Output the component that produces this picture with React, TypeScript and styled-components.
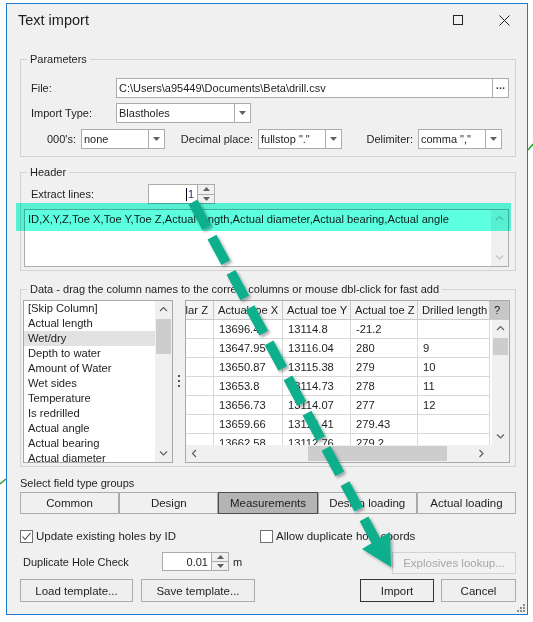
import * as React from 'react';
import styled, {createGlobalStyle} from 'styled-components';

const GlobalStyle = createGlobalStyle`
  html, body {
    margin: 0;
    padding: 0;
    background: #fff;
  }
  body {
    font-family: "Liberation Sans", Arial, sans-serif;
    font-size: 11px;
    color: #1e1e1e;
  }
  *, *::before, *::after {
    box-sizing: border-box;
  }
`;

type Dir = 'up' | 'down' | 'left' | 'right';

const COLUMNS = [
  {title: 'Collar Z', width: 28},
  {title: 'Actual toe X', width: 69},
  {title: 'Actual toe Y', width: 68},
  {title: 'Actual toe Z', width: 67},
  {title: 'Drilled length', width: 72},
];

const ROWS = [
  ['', '13696.4', '13114.8', '-21.2', ''],
  ['', '13647.95', '13116.04', '280', '9'],
  ['', '13650.87', '13115.38', '279', '10'],
  ['', '13653.8', '13114.73', '278', '11'],
  ['', '13656.73', '13114.07', '277', '12'],
  ['', '13659.66', '13113.41', '279.43', ''],
  ['', '13662.58', '13112.76', '279.2', ''],
];

const FIELDS = [
  '[Skip Column]', 'Actual length', 'Wet/dry', 'Depth to water', 'Amount of Water', 'Wet sides',
  'Temperature', 'Is redrilled', 'Actual angle', 'Actual bearing', 'Actual diameter',
];

const GROUPS = ['Common', 'Design', 'Measurements', 'Design loading', 'Actual loading'];

const Page = styled.div`
  position: relative;
  width: 533px;
  height: 622px;
  padding: 3px 5px 7px 6px;
  overflow: hidden;
`;

const Window = styled.div`
  position: relative;
  height: 100%;
  border: 1px solid #1c7bd0;
  background: #f0f0f0;
  display: flex;
  flex-direction: column;
`;

const TitleBar = styled.div`
  height: 32px;
  flex-shrink: 0;
  display: flex;
  align-items: center;
  padding-left: 11px;
`;

const Title = styled.div`
  flex: 1;
  font-size: 14.5px;
  color: #1b1b1b;
`;

const CaptionButton = styled.div<{$w: number}>`
  width: ${p => p.$w}px;
  height: 100%;
  display: flex;
  align-items: center;
  justify-content: center;
`;

const Body = styled.div`
  flex: 1;
  display: flex;
  flex-direction: column;
  padding: 15px 11px 0 13px;
`;

const Group = styled.fieldset<{$mt?: number}>`
  margin: ${p => p.$mt || 0}px 0 0;
  padding: 0;
  min-width: 0;
  border: 1px solid #d3d3d3;
  legend {
    margin-left: 6px;
    padding: 0 3px;
    line-height: 16px;
    white-space: nowrap;
  }
`;

const GroupContent = styled.div<{$pad: string}>`
  padding: ${p => p.$pad};
  display: flex;
  flex-direction: column;
`;

const Row = styled.div<{$mt?: number; $gap?: number}>`
  display: flex;
  align-items: center;
  height: 20px;
  margin-top: ${p => p.$mt || 0}px;
  gap: ${p => p.$gap || 0}px;
`;

const Label = styled.div<{$w: number; $right?: boolean; $ml?: number}>`
  width: ${p => p.$w}px;
  flex-shrink: 0;
  margin-left: ${p => p.$ml || 0}px;
  text-align: ${p => (p.$right ? 'right' : 'left')};
  white-space: nowrap;
`;

const Box = styled.div<{$w?: number; $h?: number}>`
  width: ${p => (p.$w ? `${p.$w}px` : 'auto')};
  flex: ${p => (p.$w ? '0 0 auto' : '1')};
  height: ${p => p.$h || 20}px;
  display: flex;
  border: 1px solid #acacac;
  background: #fff;
`;

const BoxText = styled.div<{$right?: boolean}>`
  flex: 1;
  display: flex;
  align-items: center;
  justify-content: ${p => (p.$right ? 'flex-end' : 'flex-start')};
  padding: 0 3px 0 2px;
  white-space: nowrap;
  overflow: hidden;
`;

const BoxButton = styled.div`
  width: 16px;
  flex-shrink: 0;
  border-left: 1px solid #acacac;
  display: flex;
  align-items: center;
  justify-content: center;
  color: #444;
  font-weight: bold;
  letter-spacing: -0.5px;
`;

const SpinButtons = styled.div`
  width: 17px;
  flex-shrink: 0;
  display: flex;
  flex-direction: column;
  border-left: 1px solid #acacac;
  background: #f0f0f0;
  > div {
    flex: 1;
    display: flex;
    align-items: center;
    justify-content: center;
  }
  > div + div {
    border-top: 1px solid #acacac;
  }
`;

const Caret = styled.span`
  border-left: 1px solid #000;
  padding-left: 1px;
  line-height: 13px;
  color: #2a2a7a;
`;

const TextArea = styled.div`
  margin-top: 5px;
  height: 58px;
  display: flex;
  border: 1px solid #acacac;
  background: #fff;
`;

const TextLines = styled.div`
  flex: 1;
  padding: 2px 3px;
  line-height: 15px;
  font-size: 11.2px;
  white-space: nowrap;
  overflow: hidden;
`;

const ScrollV = styled.div<{$w?: number}>`
  width: ${p => p.$w || 17}px;
  flex-shrink: 0;
  display: flex;
  flex-direction: column;
  background: #f0f0f0;
`;

const ScrollH = styled.div`
  display: flex;
  background: #f0f0f0;
  height: 17px;
`;

const ArrowCell = styled.div`
  width: 17px;
  height: 17px;
  flex-shrink: 0;
  display: flex;
  align-items: center;
  justify-content: center;
`;

const Track = styled.div<{$horizontal?: boolean}>`
  flex: 1;
  display: flex;
  flex-direction: ${p => (p.$horizontal ? 'row' : 'column')};
  padding: 1px;
`;

const Thumb = styled.div<{$offset: number; $size: number; $horizontal?: boolean}>`
  background: #cdcdcd;
  flex-shrink: 0;
  ${p => (p.$horizontal
    ? `margin-left: ${p.$offset}px; width: ${p.$size}px;`
    : `margin-top: ${p.$offset}px; height: ${p.$size}px;`)}
`;

const DataArea = styled.div`
  display: flex;
  height: 163px;
`;

const ListBox = styled.div`
  width: 150px;
  flex-shrink: 0;
  display: flex;
  border: 1px solid #a8a8a8;
  background: #fff;
`;

const ListItems = styled.div`
  flex: 1;
  overflow: hidden;
`;

const ListItem = styled.div<{$selected?: boolean}>`
  height: 15px;
  line-height: 15px;
  padding-left: 4px;
  font-size: 11.2px;
  white-space: nowrap;
  background: ${p => (p.$selected ? '#e2e2e2' : 'transparent')};
`;

const Splitter = styled.div`
  width: 12px;
  flex-shrink: 0;
  display: flex;
  align-items: center;
  justify-content: center;
`;

const GridView = styled.div`
  flex: 1;
  display: grid;
  grid-template-columns: 1fr 19px;
  grid-template-rows: 19px 1fr 17px;
  border: 1px solid #a8a8a8;
  background: #fff;
  overflow: hidden;
`;

const HeaderRow = styled.div`
  grid-column: 1 / -1;
  display: flex;
`;

const HeaderCell = styled.div<{$w?: number; $dark?: boolean; $clip?: boolean}>`
  width: ${p => (p.$w ? `${p.$w}px` : 'auto')};
  flex: ${p => (p.$w ? '0 0 auto' : '1')};
  display: flex;
  align-items: center;
  justify-content: ${p => (p.$clip ? 'flex-end' : 'flex-start')};
  padding: ${p => (p.$clip ? '0 5px 0 0' : '0 0 0 4px')};
  overflow: hidden;
  white-space: nowrap;
  font-size: 11.2px;
  background: ${p => (p.$dark ? '#c6c6c6' : '#f4f4f4')};
  border-right: 1px solid #c9c9c9;
  border-bottom: 1px solid #c9c9c9;
`;

const GridBody = styled.div`
  overflow: hidden;
`;

const GridRow = styled.div`
  display: flex;
  height: 19px;
  border-bottom: 1px solid #d8d8d8;
`;

const GridCell = styled.div<{$w?: number}>`
  width: ${p => (p.$w ? `${p.$w}px` : 'auto')};
  flex: ${p => (p.$w ? '0 0 auto' : '1')};
  padding-left: 5px;
  line-height: 18px;
  font-size: 11.2px;
  white-space: nowrap;
  overflow: hidden;
  border-right: 1px solid #d8d8d8;
`;

const GridCorner = styled.div`
  background: #f0f0f0;
`;

const SectionLabel = styled.div`
  margin-top: 8px;
  line-height: 16px;
`;

const Segments = styled.div`
  margin-top: 1px;
  height: 22px;
  display: flex;
`;

const Segment = styled.div<{$active?: boolean}>`
  flex: 1;
  display: flex;
  align-items: center;
  justify-content: center;
  font-size: 11.5px;
  border: 1px solid ${p => (p.$active ? '#4d4d4d' : '#ababab')};
  background: ${p => (p.$active ? '#b4b4b4' : '#f0f0f0')};
`;

const CheckRow = styled.div`
  margin-top: 14px;
  height: 16px;
  display: flex;
  align-items: center;
`;

const CheckItem = styled.div<{$w?: number}>`
  width: ${p => (p.$w ? `${p.$w}px` : 'auto')};
  display: flex;
  align-items: center;
  gap: 3px;
  font-size: 11.5px;
`;

const CheckBox = styled.div`
  width: 13px;
  height: 13px;
  border: 1px solid #707070;
  background: #fff;
  display: flex;
  align-items: center;
  justify-content: center;
`;

const OptionRow = styled.div`
  margin-top: 8px;
  height: 22px;
  display: flex;
  align-items: flex-start;
  justify-content: space-between;
`;

const SpinGroup = styled.div`
  display: flex;
  align-items: center;
  height: 19px;
`;

const Unit = styled.span`
  margin-left: 4px;
`;

const ButtonRow = styled.div`
  margin-top: 5px;
  height: 23px;
  display: flex;
`;

const Button = styled.div<{$w: number; $ml?: number; $default?: boolean; $disabled?: boolean}>`
  width: ${p => p.$w}px;
  height: ${p => (p.$disabled ? 22 : 23)}px;
  margin-left: ${p => p.$ml || 0}px;
  display: flex;
  align-items: center;
  justify-content: center;
  font-size: 11.5px;
  white-space: nowrap;
  color: ${p => (p.$disabled ? '#a6a6a6' : '#1e1e1e')};
  background: ${p => (p.$disabled ? '#f2f2f2' : '#efefef')};
  border: 1px solid ${p => (p.$default ? '#333' : p.$disabled ? '#d2d2d2' : '#ababab')};
`;

const Spacer = styled.div`
  flex: 1;
`;

const Grip = styled.svg`
  position: absolute;
  right: 0;
  bottom: 0;
`;

const Highlight = styled.div`
  position: absolute;
  left: 16px;
  top: 203px;
  width: 495px;
  height: 28px;
  background: #5cffdf;
  mix-blend-mode: multiply;
`;

const Overlay = styled.svg`
  position: absolute;
  left: 0;
  top: 0;
  pointer-events: none;
`;

const Chevron = ({dir, color = '#606060'}: {dir: Dir; color?: string}) => {
  const points = {
    up: '1,5 4.5,1.5 8,5',
    down: '1,1.5 4.5,5 8,1.5',
    left: '5,1 1.5,4.5 5,8',
    right: '1.5,1 5,4.5 1.5,8',
  }[dir];
  const vertical = dir === 'up' || dir === 'down';
  return (
    <svg width={vertical ? 9 : 7} height={vertical ? 7 : 9}>
      <polyline points={points} fill="none" stroke={color} strokeWidth="1.2"/>
    </svg>
  );
};

const Triangle = ({dir}: {dir: 'up' | 'down'}) => (
  <svg width="7" height="4">
    <polygon points={dir === 'down' ? '0,0 7,0 3.5,4' : '0,4 7,4 3.5,0'} fill="#606060"/>
  </svg>
);

const Combo = ({w, value}: {w: number; value: string}) => (
  <Box $w={w}>
    <BoxText>{value}</BoxText>
    <BoxButton><Triangle dir="down"/></BoxButton>
  </Box>
);

const Spin = ({h, children}: {h: number; children: React.ReactNode}) => (
  <Box $w={67} $h={h}>
    <BoxText $right>{children}</BoxText>
    <SpinButtons>
      <div><Triangle dir="up"/></div>
      <div><Triangle dir="down"/></div>
    </SpinButtons>
  </Box>
);

const VScrollBar = (props: {offset?: number; size?: number; color?: string}) => (
  <ScrollV>
    <ArrowCell><Chevron dir="up" color={props.color}/></ArrowCell>
    <Track>{props.size ? <Thumb $offset={props.offset || 0} $size={props.size}/> : null}</Track>
    <ArrowCell><Chevron dir="down" color={props.color}/></ArrowCell>
  </ScrollV>
);

export default function App() {
  return (
    <Page>
      <GlobalStyle/>
      <Window>
        <TitleBar>
          <Title>Text import</Title>
          <CaptionButton $w={47}>
            <svg width="10" height="10"><rect x="0.5" y="0.5" width="9" height="9" fill="none" stroke="#222"/></svg>
          </CaptionButton>
          <CaptionButton $w={46}>
            <svg width="11" height="11"><path d="M0.5 0.5 L10.5 10.5 M10.5 0.5 L0.5 10.5" stroke="#222"/></svg>
          </CaptionButton>
        </TitleBar>

        <Body>
          <Group>
            <legend>Parameters</legend>
            <GroupContent $pad="11px 6px 7px 10px">
              <Row>
                <Label $w={85}>File:</Label>
                <Box>
                  <BoxText>C:\Users\a95449\Documents\Beta\drill.csv</BoxText>
                  <BoxButton>···</BoxButton>
                </Box>
              </Row>
              <Row $mt={5}>
                <Label $w={85}>Import Type:</Label>
                <Combo w={135} value="Blastholes"/>
              </Row>
              <Row $mt={6} $gap={5}>
                <Label $w={45} $right>000's:</Label>
                <Combo w={84} value="none"/>
                <Label $w={83} $right>Decimal place:</Label>
                <Combo w={84} value={'fullstop "."'}/>
                <Label $w={66} $right>Delimiter:</Label>
                <Combo w={84} value={'comma ","'}/>
              </Row>
            </GroupContent>
          </Group>

          <Group $mt={7}>
            <legend>Header</legend>
            <GroupContent $pad="4px 6px 3px 3px">
              <Row>
                <Label $w={117} $ml={7}>Extract lines:</Label>
                <Spin h={20}><Caret>1</Caret></Spin>
              </Row>
              <TextArea>
                <TextLines>
                  ID,X,Y,Z,Toe X,Toe Y,Toe Z,Actual length,Actual diameter,Actual bearing,Actual angle
                </TextLines>
                <VScrollBar color="#c2c2c2"/>
              </TextArea>
            </GroupContent>
          </Group>

          <Group $mt={10}>
            <legend>Data - drag the column names to the correct columns or mouse dbl-click for fast add</legend>
            <GroupContent $pad="3px 5px 3px 2px">
              <DataArea>
                <ListBox>
                  <ListItems>
                    {FIELDS.map(f => (
                      <ListItem key={f} $selected={f === 'Wet/dry'}>{f}</ListItem>
                    ))}
                  </ListItems>
                  <VScrollBar offset={0} size={35}/>
                </ListBox>
                <Splitter>
                  <svg width="3" height="14">
                    <rect x="0" y="0" width="2" height="2" fill="#555"/>
                    <rect x="0" y="5" width="2" height="2" fill="#555"/>
                    <rect x="0" y="10" width="2" height="2" fill="#555"/>
                  </svg>
                </Splitter>
                <GridView>
                  <HeaderRow>
                    {COLUMNS.map((c, i) => (
                      <HeaderCell key={c.title} $w={c.width} $clip={i === 0}>{c.title}</HeaderCell>
                    ))}
                    <HeaderCell $dark>?</HeaderCell>
                  </HeaderRow>
                  <GridBody>
                    {ROWS.map((r, ri) => (
                      <GridRow key={ri}>
                        {r.map((v, ci) => (
                          <GridCell key={ci} $w={ci < 4 ? COLUMNS[ci].width : undefined}>{v}</GridCell>
                        ))}
                      </GridRow>
                    ))}
                  </GridBody>
                  <ScrollV $w={17} style={{marginLeft: 2}}>
                    <ArrowCell><Chevron dir="up"/></ArrowCell>
                    <Track><Thumb $offset={0} $size={17}/></Track>
                    <ArrowCell><Chevron dir="down"/></ArrowCell>
                  </ScrollV>
                  <ScrollH>
                    <ArrowCell><Chevron dir="left"/></ArrowCell>
                    <Track $horizontal><Thumb $horizontal $offset={104} $size={139}/></Track>
                    <ArrowCell><Chevron dir="right"/></ArrowCell>
                  </ScrollH>
                  <GridCorner/>
                </GridView>
              </DataArea>
            </GroupContent>
          </Group>

          <SectionLabel>Select field type groups</SectionLabel>
          <Segments>
            {GROUPS.map(g => (
              <Segment key={g} $active={g === 'Measurements'}>{g}</Segment>
            ))}
          </Segments>

          <CheckRow>
            <CheckItem $w={240}>
              <CheckBox>
                <svg width="11" height="11"><polyline points="1.5,5.5 4,8.5 9.5,2" fill="none" stroke="#444" strokeWidth="1.1"/></svg>
              </CheckBox>
              Update existing holes by ID
            </CheckItem>
            <CheckItem>
              <CheckBox/>
              Allow duplicate hole coords
            </CheckItem>
          </CheckRow>

          <OptionRow>
            <SpinGroup>
              <Label $w={139} $ml={3}>Duplicate Hole Check</Label>
              <Spin h={19}>0.01</Spin>
              <Unit>m</Unit>
            </SpinGroup>
            <Button $w={124} $disabled>Explosives lookup...</Button>
          </OptionRow>

          <ButtonRow>
            <Button $w={113}>Load template...</Button>
            <Button $w={114} $ml={8}>Save template...</Button>
            <Spacer/>
            <Button $w={74} $default>Import</Button>
            <Button $w={75} $ml={7}>Cancel</Button>
          </ButtonRow>
        </Body>

        <Grip width="11" height="11">
          {[[7, 1], [4, 4], [7, 4], [1, 7], [4, 7], [7, 7]].map(([x, y]) => (
            <rect key={`${x}-${y}`} x={x} y={y} width="2" height="2" fill="#8a8a8a"/>
          ))}
        </Grip>
      </Window>

      <Highlight/>

      <Overlay width="533" height="622" viewBox="0 0 533 622">
        <defs>
          <filter id="arrowShadow" x="-20%" y="-20%" width="140%" height="140%">
            <feDropShadow dx="2" dy="2" stdDeviation="1.5" floodColor="#000" floodOpacity="0.35"/>
          </filter>
        </defs>
        <path d="M528 150 L533 144" stroke="#2aa52a" strokeWidth="1.5"/>
        <path d="M0 484 L6 479" stroke="#2aa52a" strokeWidth="1.5"/>
        <g filter="url(#arrowShadow)">
          <line x1="193" y1="202" x2="376" y2="541" stroke="#0daf8d" strokeWidth="10" strokeDasharray="29 11"/>
          <polygon points="391,567 362,549 390,532" fill="#0daf8d"/>
        </g>
      </Overlay>
    </Page>
  );
}
